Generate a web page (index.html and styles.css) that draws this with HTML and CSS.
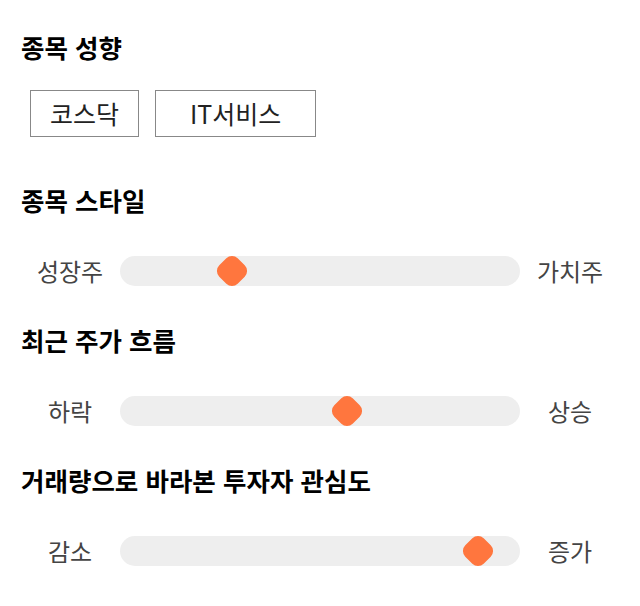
FILE: index.html
```html
<!DOCTYPE html>
<html lang="ko">
<head>
    <meta charset="UTF-8">
    <title>종목 성향</title>
    <link rel="stylesheet" href="styles.css">
</head>
<body>
    <div class="container">
        <h2>종목 성향</h2>
        <div class="tags">
            <span class="tag">코스닥</span>
            <span class="tag tag-wide">IT서비스</span>
        </div>

        <h2>종목 스타일</h2>
        <div class="slider-row">
            <span class="label">성장주</span>
            <div class="track">
                <span class="thumb" style="left: 28%"></span>
            </div>
            <span class="label">가치주</span>
        </div>

        <h2>최근 주가 흐름</h2>
        <div class="slider-row">
            <span class="label">하락</span>
            <div class="track">
                <span class="thumb" style="left: 56.7%"></span>
            </div>
            <span class="label">상승</span>
        </div>

        <h2>거래량으로 바라본 투자자 관심도</h2>
        <div class="slider-row">
            <span class="label">감소</span>
            <div class="track">
                <span class="thumb" style="left: 89.5%"></span>
            </div>
            <span class="label">증가</span>
        </div>
    </div>
</body>
</html>
```

FILE: styles.css
```css
body {
    font-family: "Noto Sans CJK KR", "Noto Sans", sans-serif;
    background-color: #fff;
    color: #000;
    margin: 0;
    padding: 0;
}

.container {
    padding: 30px 20px 20px;
}

h2 {
    font-size: 25.5px;
    font-weight: 700;
    line-height: 34px;
    margin: 0;
    padding-left: 1px;
}

.tags {
    display: flex;
    gap: 16px;
    padding: 26px 10px 46px;
}

.tag {
    border: 1px solid #888;
    padding: 0 19px;
    height: 45px;
    line-height: 45px;
    font-size: 25px;
    color: #222;
}

.tag-wide {
    padding: 0 34px;
}

.slider-row {
    display: flex;
    align-items: center;
    padding: 39px 0 37px;
}

.label {
    width: 100px;
    text-align: center;
    font-size: 24px;
    line-height: 30px;
    color: #444;
}

.track {
    position: relative;
    width: 400px;
    height: 30px;
    border-radius: 15px;
    background-color: #eee;
}

.thumb {
    position: absolute;
    top: 2px;
    width: 26px;
    height: 26px;
    margin-left: -13px;
    border-radius: 8px;
    background-color: #ff763e;
    transform: rotate(45deg);
}
```
